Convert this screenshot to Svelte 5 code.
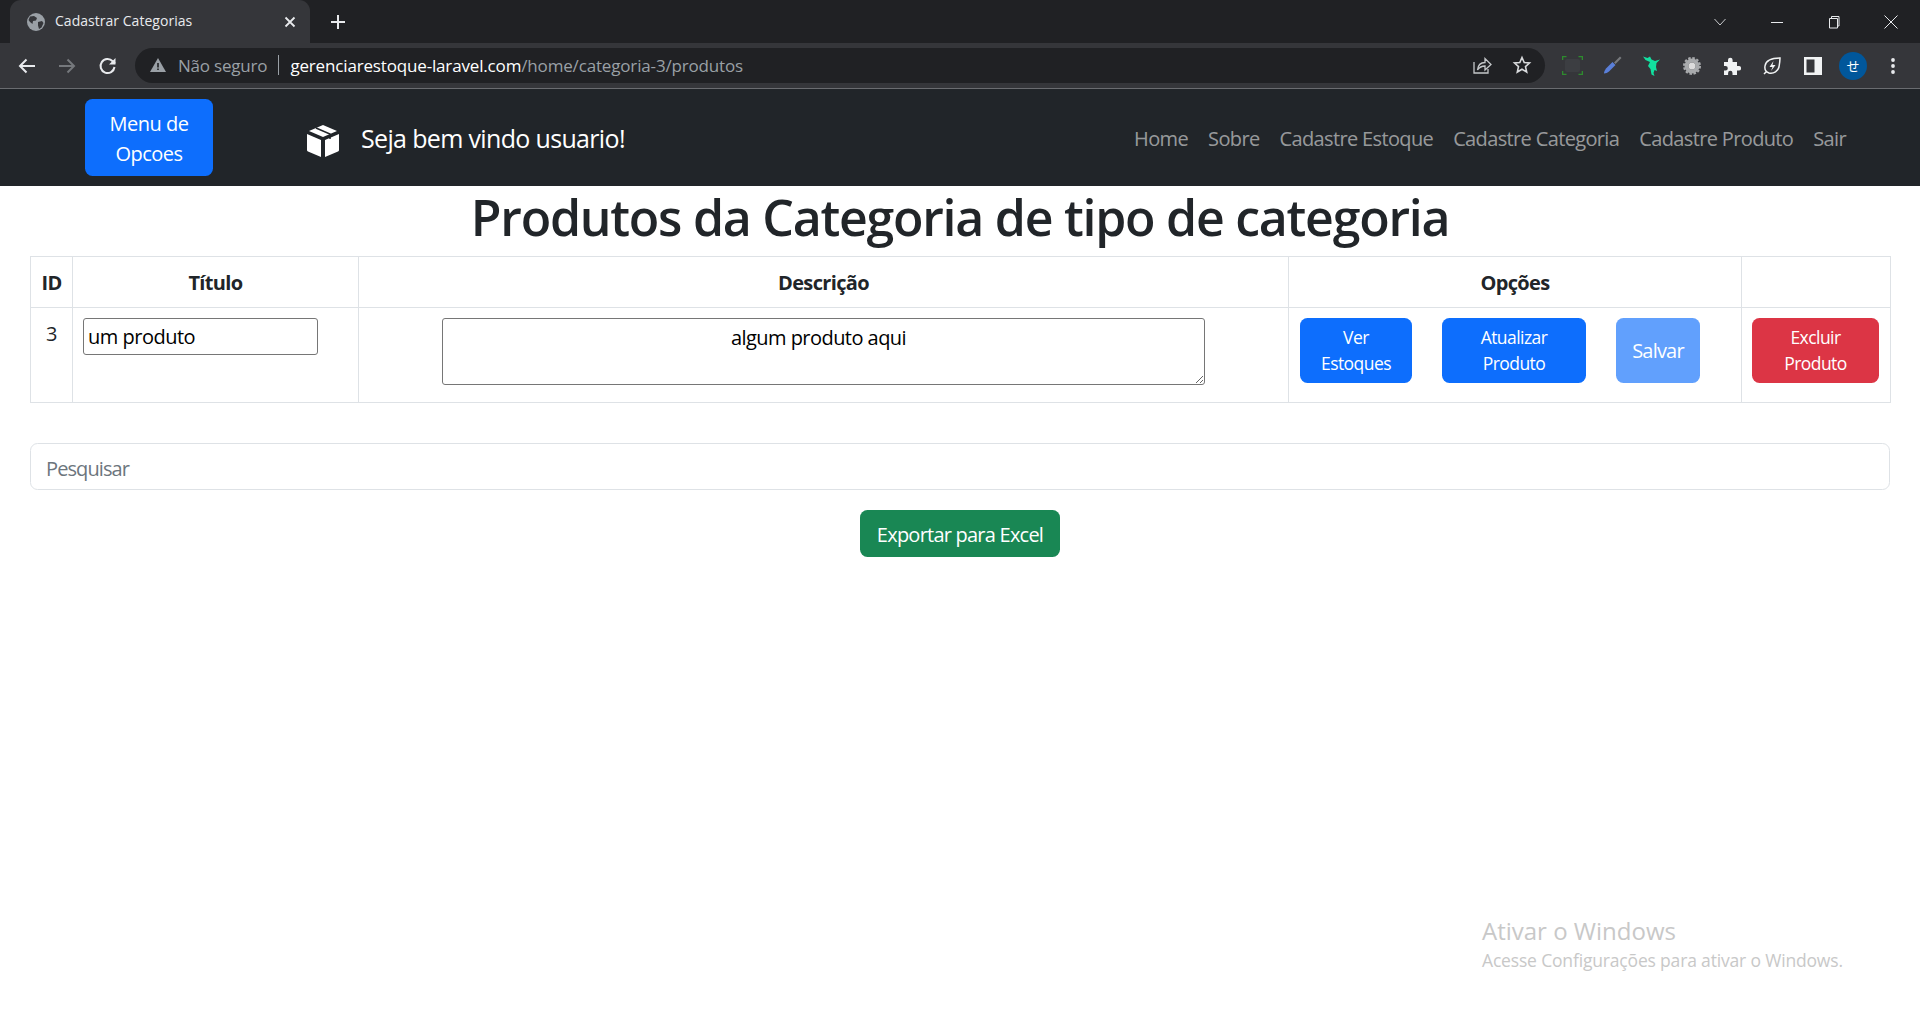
<script>
  const links = ['Home', 'Sobre', 'Cadastre Estoque', 'Cadastre Categoria', 'Cadastre Produto', 'Sair'];
</script>

<div class="page">
  <header class="chrome">
    <div class="tabstrip">
      <div class="tab">
        <svg class="fav" width="18" height="18" viewBox="0 0 18 18"><circle cx="9" cy="9" r="9" fill="#9aa0a6"/><path d="M3 3.500 7 3l3 2-1 2.500-3 .5-.5 3L3 9 1.500 7zM11 9l4-1 1.500 2-2 4.500-2.500 1.500-1-3.500z" fill="#35363a"/></svg>
        <span class="tabtitle">Cadastrar Categorias</span>
        <svg class="tabx" width="12" height="12" viewBox="0 0 12 12"><path d="M1.500 1.500l9 9M10.500 1.500l-9 9" stroke="#e8eaed" stroke-width="1.800"/></svg>
      </div>
      <svg class="plus" width="16" height="16" viewBox="0 0 16 16"><path d="M8 1v14M1 8h14" stroke="#e8eaed" stroke-width="2"/></svg>
      <div class="winctl">
        <svg class="wc" width="14" height="10" viewBox="0 0 14 10"><path d="M1.500 2l5.500 6 5.500-6" fill="none" stroke="#c8cacd" stroke-width="1"/></svg>
        <svg class="wc" width="14" height="14" viewBox="0 0 14 14"><path d="M1 7.500h12" stroke="#e8eaed" stroke-width="1"/></svg>
        <svg class="wc" width="14" height="14" viewBox="0 0 14 14"><path d="M2.500 3.500h8v9.500h-8zM4.500 3.500V1.500h7.500v9.500h-1.500" fill="none" stroke="#e8eaed" stroke-width="1"/></svg>
        <svg class="wc" width="14" height="14" viewBox="0 0 14 14"><path d="M.5.5l13 13M13.500.5l-13 13" stroke="#e8eaed" stroke-width="1"/></svg>
      </div>
    </div>
    <div class="toolbar">
      <div class="navbtns">
        <svg width="20" height="20" viewBox="0 0 20 20"><path d="M18 10H3M9.500 3.500 3 10l6.500 6.500" fill="none" stroke="#e8eaed" stroke-width="2"/></svg>
        <svg width="20" height="20" viewBox="0 0 20 20"><path d="M2 10h15M10.500 3.500 17 10l-6.500 6.500" fill="none" stroke="#75787c" stroke-width="2"/></svg>
        <svg class="reload" width="20" height="20" viewBox="0 0 20 20"><path d="M16.500 11a7 7 0 1 1-1.800-5.700L17 7.500" fill="none" stroke="#e8eaed" stroke-width="2"/><path d="M17.500 2v6.500H11z" fill="#e8eaed"/></svg>
      </div>
      <div class="omni">
        <svg class="warn" width="16" height="14" viewBox="0 0 16 14"><path d="M8 0l8 14H0z" fill="#9aa0a6"/><path d="M7.200 5h1.600v4.500H7.200zM7.200 10.500h1.600V12H7.200z" fill="#202124"/></svg>
        <span class="insecure">Não seguro</span>
        <span class="sep"></span>
        <span class="url"><b>gerenciarestoque-laravel.com</b>/home/categoria-3/produtos</span>
        <svg class="share" width="20" height="20" viewBox="0 0 20 20"><path d="M2 7v11h14v-4" fill="none" stroke="#c4c7c9" stroke-width="1.300"/><path d="M5.500 15c.5-5 3.500-7.500 7.500-7.500V3.500l6 6-6 5.500v-4c-3 0-5.500 1-7.500 4z" fill="none" stroke="#c4c7c9" stroke-width="1.300"/></svg>
        <svg class="star" width="20" height="20" viewBox="0 0 20 20"><path d="M10 2.500l2.200 5 5.300.5-4 3.600 1.200 5.400L10 14.200 5.300 17l1.200-5.400-4-3.600 5.300-.5z" fill="none" stroke="#d8dadc" stroke-width="1.600"/></svg>
      </div>
      <div class="exts">
        <svg width="21" height="19" viewBox="0 0 21 19"><rect x="3" y="3" width="15" height="13" rx="2" fill="#3c3e42"/><path d="M.5 4V.5h4M16.500.5h4v3.500M.5 15v3.500h4M16.500 18.500h4V15" fill="none" stroke="#2e8b2e" stroke-width="1.600"/></svg>
        <svg width="19" height="19" viewBox="0 0 19 19"><path d="M1 17.500c0-2 1-3.500 2-5L9.500 6l3 3-6.500 6.500c-1.500 1-3 2-5 2z" fill="#5a7fd8"/><path d="M11 6.500l6-6 1.500 1.500-6 6z" fill="#77797d"/></svg>
        <svg width="18" height="20" viewBox="0 0 18 20"><path d="M0 .5l4.500 1.500 2.500-1.500 1.500 3L12 5l5-1.500L13.500 7l-.5 4 1 4-2.500-1-1 3 1 3-3-1.500-1-5.500L5 10 7 6 2.500 4z" fill="#12e0a0"/></svg>
        <svg width="18" height="18" viewBox="0 0 18 18"><circle cx="9" cy="9" r="5.500" fill="none" stroke="#a9abad" stroke-width="4"/><circle cx="9" cy="9" r="8" fill="none" stroke="#a9abad" stroke-width="2" stroke-dasharray="2.500 1.700"/><circle cx="9" cy="9" r="3.500" fill="#dcdcdc"/></svg>
        <svg width="18" height="18" viewBox="0 0 18 18"><path d="M1 5h4V3a2.300 2.300 0 0 1 4.600 0v2H14v4h1.800a2.300 2.300 0 0 1 0 4.600H14V18H9.500v-2a2.200 2.200 0 0 0-4.400 0v2H1v-4.500h1.500a2.300 2.300 0 0 0 0-4.600H1z" fill="#f1f3f4"/></svg>
        <svg width="18" height="18" viewBox="0 0 18 18"><path d="M17 1C9 1 3 3 2 9c-.5 3 1 6 4 7 5 1 9-2 10-6 .5-3 1-6 1-9zM1 17l3-3" fill="none" stroke="#f1f3f4" stroke-width="1.500"/><path d="M10.500 4 6.500 10h3l-1.500 4 4.500-6h-3z" fill="#f1f3f4"/></svg>
        <svg width="18" height="18" viewBox="0 0 18 18"><path d="M0 0h18v18H0z" fill="#f1f3f4"/><path d="M2.500 2.500h8v13h-8z" fill="#35363a"/></svg>
        <span class="avatar">せ</span>
        <svg class="dots" width="6" height="18" viewBox="0 0 6 18"><circle cx="3" cy="3" r="1.900" fill="#e8eaed"/><circle cx="3" cy="9" r="1.900" fill="#e8eaed"/><circle cx="3" cy="15" r="1.900" fill="#e8eaed"/></svg>
      </div>
    </div>
  </header>

  <nav class="navbar">
    <button class="btn menu">Menu de Opcoes</button>
    <div class="brand">
      <svg width="32" height="32" viewBox="0 0 32 32"><path d="M16 0 30 6 16 12 2 6z" fill="#fff"/><path d="M0 9l14 6v17L1 26.500a2 2 0 0 1-1-2zM32 9l-14 6v17l13-5.500a2 2 0 0 0 1-2z" fill="#fff"/><path d="M9 3l14 6v5" fill="none" stroke="#212529" stroke-width="1.500"/></svg>
      <span>Seja bem vindo usuario!</span>
    </div>
    <ul class="links">
      {#each links as l}<li>{l}</li>{/each}
    </ul>
  </nav>

  <main>
    <h1>Produtos da Categoria de tipo de categoria</h1>
    <table>
      <colgroup><col class="c1" /><col class="c2" /><col class="c3" /><col class="c4" /><col class="c5" /></colgroup>
      <thead>
        <tr><th>ID</th><th>Título</th><th>Descrição</th><th>Opções</th><th></th></tr>
      </thead>
      <tbody>
        <tr>
          <td class="num">3</td>
          <td class="left"><input value="um produto" /></td>
          <td><textarea>algum produto aqui</textarea></td>
          <td>
            <div class="acts">
              <button class="btn sm ver">Ver Estoques</button>
              <button class="btn sm atu">Atualizar Produto</button>
              <button class="btn salvar">Salvar</button>
            </div>
          </td>
          <td><button class="btn sm del">Excluir Produto</button></td>
        </tr>
      </tbody>
    </table>
    <input class="search" placeholder="Pesquisar" />
    <div class="center"><button class="btn excel">Exportar para Excel</button></div>
  </main>

  <div class="watermark">
    <div class="w1">Ativar o Windows</div>
    <div class="w2">Acesse Configurações para ativar o Windows.</div>
  </div>
</div>

<style>
  :global(body) { margin: 0; background: #fff; }
  .page { width: 1920px; height: 1020px; position: relative; overflow: hidden; font-family: "Open Sans", "Noto Sans", sans-serif; color: #212529; font-size: 20px; line-height: 30px; letter-spacing: -.5px; }
  .chrome { height: 89px; background: #35363a; letter-spacing: 0; }
  .tabstrip { height: 43px; background: #202124; display: flex; align-items: center; }
  .tab { width: 300px; height: 43px; margin-left: 10px; background: #35363a; border-radius: 11px 11px 0 0; display: flex; align-items: center; color: #e8eaed; font-size: 14px; }
  .fav { margin-left: 17px; }
  .tabtitle { margin-left: 10px; flex: 1; padding-bottom: 2px; letter-spacing: .03px; }
  .tabx { margin-right: 14px; }
  .plus { margin-left: 20px; }
  .winctl { margin-left: auto; display: flex; align-items: center; gap: 43px; padding-right: 22px; }
  .toolbar { height: 45px; display: flex; align-items: center; border-bottom: 1px solid #6a6c70; }
  .navbtns { display: flex; gap: 20px; margin-left: 17px; align-items: center; }
  .reload { margin-left: 1px; }
  .omni { width: 1410px; height: 35px; margin-left: 17px; margin-top: -1px; border-radius: 18px; background: #202124; display: flex; align-items: center; font-size: 17px; }
  .warn { margin-left: 15px; }
  .insecure { margin-left: 12px; padding-top: 2px; color: #9aa0a6; letter-spacing: -.2px; }
  .sep { width: 1px; height: 20px; background: #9aa0a6; margin: 0 11px; }
  .url { color: #9aa0a6; flex: 1; padding-top: 2px; letter-spacing: -.16px; }
  .url b { color: #fff; font-weight: 400; }
  .share { margin-right: 20px; }
  .star { margin-right: 13px; }
  .exts { display: flex; align-items: center; margin-left: 17px; }
  .exts > svg:nth-child(1) { margin-right: 20px; }
  .exts > svg:nth-child(2) { margin-right: 21px; }
  .exts > svg:nth-child(3) { margin-right: 22px; }
  .exts > svg:nth-child(4) { margin-right: 22px; }
  .exts > svg:nth-child(5) { margin-right: 22px; }
  .exts > svg:nth-child(6) { margin-right: 23px; }
  .exts > svg:nth-child(7) { margin-right: 17px; }
  .avatar { width: 28px; height: 28px; border-radius: 50%; background: #01579b; color: #fff; font: 13px/28px "Noto Sans CJK JP", sans-serif; text-align: center; }
  .dots { margin-left: 23px; }

  .navbar { height: 97px; background: #212529; display: flex; align-items: center; }
  .btn { border: 1px solid transparent; color: #fff; background: #0d6efd; font: inherit; letter-spacing: inherit; font-size: 20px; line-height: 30px; padding: 7.5px 15px; border-radius: 7.5px; box-sizing: border-box; }
  .menu { width: 128px; height: 77px; margin-left: 85px; padding-top: 9px; padding-bottom: 6px; }
  .brand { display: flex; align-items: center; margin-left: 94px; color: #fff; font-size: 25px; letter-spacing: -.66px; }
  .brand svg { margin-top: 6px; }
  .brand span { margin-left: 22px; }
  .links { list-style: none; margin: 2px 0 0 auto; padding: 0 74px 0 0; display: flex; gap: 20px; color: rgba(255,255,255,.55); letter-spacing: -.64px; }

  main { padding: 0 30px; }
  h1 { margin: 0 0 9px; padding-top: 1px; font-size: 50px; font-weight: 600; line-height: 60px; text-align: center; letter-spacing: -1.25px; }
  table { border-collapse: collapse; table-layout: fixed; width: 1860px; margin-bottom: 40px; }
  .c1 { width: 42px; } .c2 { width: 286px; } .c3 { width: 930px; } .c4 { width: 453px; } .c5 { width: 149px; }
  th, td { border: 1px solid #dee2e6; padding: 10px; text-align: center; vertical-align: top; box-sizing: border-box; }
  th { font-weight: 700; height: 51px; padding-top: 11px; padding-bottom: 9px; letter-spacing: -.65px; }
  td { height: 95px; }
  td.num { padding-top: 11px; }
  td.left { text-align: left; }
  input:not(.search) { width: 235px; height: 37px; box-sizing: border-box; border: 1px solid #767676; border-radius: 3px; padding: 1px 4px; font: inherit; letter-spacing: inherit; color: #000; outline: 0; display: block; }
  textarea { width: 763px; height: 67px; box-sizing: border-box; border: 1px solid #767676; border-radius: 3px; padding: 4px 12px 2px 2px; font: inherit; letter-spacing: -.55px; color: #000; text-align: center; display: block; margin: 0 auto; }
  .acts { display: flex; gap: 30px; align-items: stretch; margin-left: 1px; }
  .sm { font-size: 17.5px; line-height: 26px; padding: 4px 10px 6px; height: 65px; letter-spacing: -.55px; }
  .ver { width: 112px; }
  .atu { width: 144px; }
  .salvar { width: 84px; height: 65px; padding: 0; opacity: .65; letter-spacing: -.8px; }
  .del { width: 127px; background: #dc3545; display: block; margin: 0; }
  .search { width: 100%; height: 47px; box-sizing: border-box; display: block; border: 1px solid #dee2e6; border-radius: 7.5px; padding: 9px 15px 6px; font: inherit; letter-spacing: -.9px; color: #212529; outline: 0; }
  .search::placeholder { color: #6c757d; opacity: 1; }
  .center { display: flex; justify-content: center; margin-top: 20px; }
  .excel { width: 200px; height: 47px; background: #198754; padding: 2px 0 0; letter-spacing: -.77px; }
  .watermark { position: absolute; left: 1482px; top: 914px; color: #c8c8c8; letter-spacing: 0; }
  .w1 { font-size: 24px; line-height: 34px; }
  .w2 { font-size: 17.5px; line-height: 25px; letter-spacing: -.17px; }
</style>
